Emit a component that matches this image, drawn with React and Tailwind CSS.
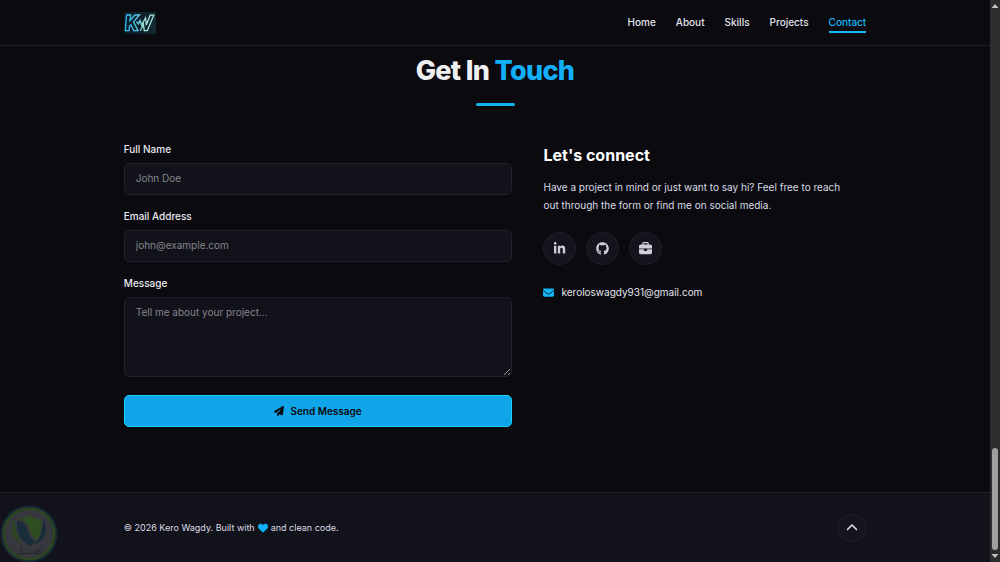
import { FaLinkedinIn, FaGithub, FaBriefcase, FaEnvelope, FaPaperPlane, FaHeart, FaChevronUp } from "react-icons/fa6";

const links = ["Home", "About", "Skills", "Projects", "Contact"];

function Logo() {
  return (
    <svg width="32" height="22" viewBox="0 0 32 22" role="img" aria-label="KW">
      <defs>
        <linearGradient id="logoBg" x1="0" x2="1">
          <stop offset="0" stopColor="#0b1c29" />
          <stop offset="1" stopColor="#122932" />
        </linearGradient>
        <linearGradient id="logoLine" gradientUnits="userSpaceOnUse" x1="0" y1="0" x2="32" y2="0">
          <stop offset="0" stopColor="#2bb8f0" />
          <stop offset="0.42" stopColor="#4fcbe8" />
          <stop offset="0.6" stopColor="#a5e6db" />
          <stop offset="1" stopColor="#b0eddb" />
        </linearGradient>
      </defs>
      <rect width="32" height="22" fill="url(#logoBg)" />
      <g fill="none" stroke="url(#logoLine)" strokeWidth="1.3" strokeLinejoin="miter">
        <path d="M2.600 3H6.800L6 8.500L11 3H15.500L9.500 9.800L14 18.700H9.800L7 12.800L5.500 14.400L5 18.700H1.300Z" />
        <path d="M12.500 9.500L14.300 12L16 8.500L17.500 13L21.500 6L22.300 13L26.200 3.200H29.800L23.300 18.700H20.300L19.400 12.500L16.300 18.700" />
      </g>
    </svg>
  );
}

function Header() {
  return (
    <header className="border-b border-[#1e1e2c]">
      <div className="mx-auto flex h-[45px] w-3/4 items-center justify-between">
        <a href="#home"><Logo /></a>
        <nav className="flex gap-5 text-[10px] leading-4 font-medium text-[#e2e2ea]">
          {links.map((name) => (
            <a
              key={name}
              href={"#" + name.toLowerCase()}
              className={name === "Contact" ? "border-b-2 border-[#14b8f5] py-px text-[#14b8f5]" : "border-b-2 border-transparent py-px"}
            >
              {name}
            </a>
          ))}
        </nav>
      </div>
    </header>
  );
}

const fieldClass = "block w-full rounded-[5px] border border-[#20202e] bg-[#12121a] px-[11px] text-[10px] leading-4 text-[#e4e4ec] placeholder:text-[#85858c]";
const labelClass = "mb-[6px] block text-[10px] leading-[15px] font-medium text-[#e8e8ee]";
const socialClass = "flex size-[33px] items-center justify-center rounded-full border border-[#20202e] bg-[#14141d] text-[#cfcfdb]";

function ContactForm() {
  return (
    <form className="flex flex-col gap-[14px]" onSubmit={(e) => e.preventDefault()}>
      <div>
        <label htmlFor="name" className={labelClass}>Full Name</label>
        <input id="name" type="text" placeholder="John Doe" className={fieldClass + " h-8 pb-[2px]"} />
      </div>
      <div>
        <label htmlFor="email" className={labelClass}>Email Address</label>
        <input id="email" type="email" placeholder="john@example.com" className={fieldClass + " h-8 pb-[2px]"} />
      </div>
      <div>
        <label htmlFor="message" className={labelClass}>Message</label>
        <textarea id="message" placeholder="Tell me about your project..." className={fieldClass + " h-20 resize-y py-[6px]"} />
      </div>
      <button type="submit" className="mt-1 flex h-8 items-center justify-center gap-[6px] rounded-[5px] border border-[#16d2fb] bg-[#10a5e9] text-[10px] font-semibold text-[#07070c]">
        <FaPaperPlane className="size-[10px]" />
        Send Message
      </button>
    </form>
  );
}

function ContactInfo() {
  return (
    <div className="pt-px">
      <h2 className="text-base leading-6 font-bold text-white">Let's connect</h2>
      <p className="mt-[11px] max-w-[310px] text-[10px] leading-[18px] text-[#dcdce8]">
        Have a project in mind or just want to say hi? Feel free to reach out through the form or find me on social media.
      </p>
      <div className="mt-[18px] flex gap-[10px]">
        <a href="#linkedin" aria-label="LinkedIn" className={socialClass}><FaLinkedinIn className="size-[13px]" /></a>
        <a href="#github" aria-label="GitHub" className={socialClass}><FaGithub className="size-[13px]" /></a>
        <a href="#portfolio" aria-label="Portfolio" className={socialClass}><FaBriefcase className="size-[13px]" /></a>
      </div>
      <a href="mailto:keroloswagdy931@gmail.com" className="mt-[18px] flex items-center gap-[7px] text-[10px] leading-[18px] text-[#e4e4ec]">
        <FaEnvelope className="size-[11px] text-[#12b5f5]" />
        keroloswagdy931@gmail.com
      </a>
    </div>
  );
}

function Watermark() {
  return (
    <svg className="absolute bottom-0 left-0" width="60" height="60" viewBox="0 0 60 60" role="img" aria-label="كفيل">
      <circle cx="29" cy="32" r="28.500" fill="#182936" />
      <circle cx="29" cy="32" r="26.500" fill="#2a451f" />
      <circle cx="29" cy="32" r="24" fill="#37383e" />
      <path d="M14 17C9 27 12 38 23 42C17 35 15 27 14 17Z" fill="#2a451f" />
      <path d="M43.500 17C48 27 46 38 35 42C41 35 43 27 43.500 17Z" fill="#182c3a" />
      <path d="M18.500 17.500Q25 16.500 29 13Q34 17 41 17.500C42 26 40 33 37 38.500C32 35 31 30 29 25C27 20 23 18 18.500 17.500Z" fill="#2e4d20" />
      <path d="M17 19C22 19 25 21 27 27C29 34 31 38 35.500 40C33 42 31 43 29 43.500C20 38 16 30 17 19Z" fill="#182c3a" />
      <text x="29" y="52" textAnchor="middle" fontSize="9" fontFamily="DejaVu Sans, sans-serif" fill="#1d232a">كفيـــل</text>
    </svg>
  );
}

function Scrollbar() {
  return (
    <div aria-hidden="true" className="flex w-[10px] flex-col items-center justify-between bg-[#2c2c2c]">
      <svg width="10" height="10" viewBox="0 0 10 10"><path d="M5 4L8.500 8H1.500Z" fill="#c4c4c4" /></svg>
      <div className="flex flex-col items-center">
        <div className="h-[102px] w-[6px] rounded-full bg-[#9f9f9f]" />
        <svg width="10" height="12" viewBox="0 0 10 12"><path d="M5 8L8.500 4H1.500Z" fill="#c4c4c4" /></svg>
      </div>
    </div>
  );
}

export default function App() {
  return (
    <div className="flex min-h-screen bg-[#0a0a0f] font-[Inter,sans-serif]">
      <div className="relative flex flex-1 flex-col">
        <Header />
        <main className="mx-auto w-3/4 flex-1 pt-[7px]">
          <h1 className="text-center text-[27px] leading-9 font-extrabold tracking-tight text-[#f0f0f2]">
            Get In <span className="text-[#12b0f8]">Touch</span>
          </h1>
          <div className="mx-auto mt-[14px] h-[3px] w-[39px] rounded-full bg-[#12b5ee]" />
          <div className="mt-9 grid grid-cols-[389fr_323fr] gap-[31px]">
            <ContactForm />
            <ContactInfo />
          </div>
        </main>
        <footer className="border-t border-[#20202b] bg-[#12121a]">
          <div className="mx-auto flex h-[69px] w-3/4 items-center justify-between text-[#dcdce6]">
            <p className="flex items-center gap-[3px] text-[9px] leading-4">
              © 2026 Kero Wagdy. Built with <FaHeart className="size-[10px] text-[#12b0f8]" /> and clean code.
            </p>
            <button type="button" aria-label="Back to top" className="flex size-7 items-center justify-center rounded-full border border-[#20202b] bg-[#14141d] text-[#e4e4ec]">
              <FaChevronUp className="size-3" />
            </button>
          </div>
        </footer>
        <Watermark />
      </div>
      <Scrollbar />
    </div>
  );
}
